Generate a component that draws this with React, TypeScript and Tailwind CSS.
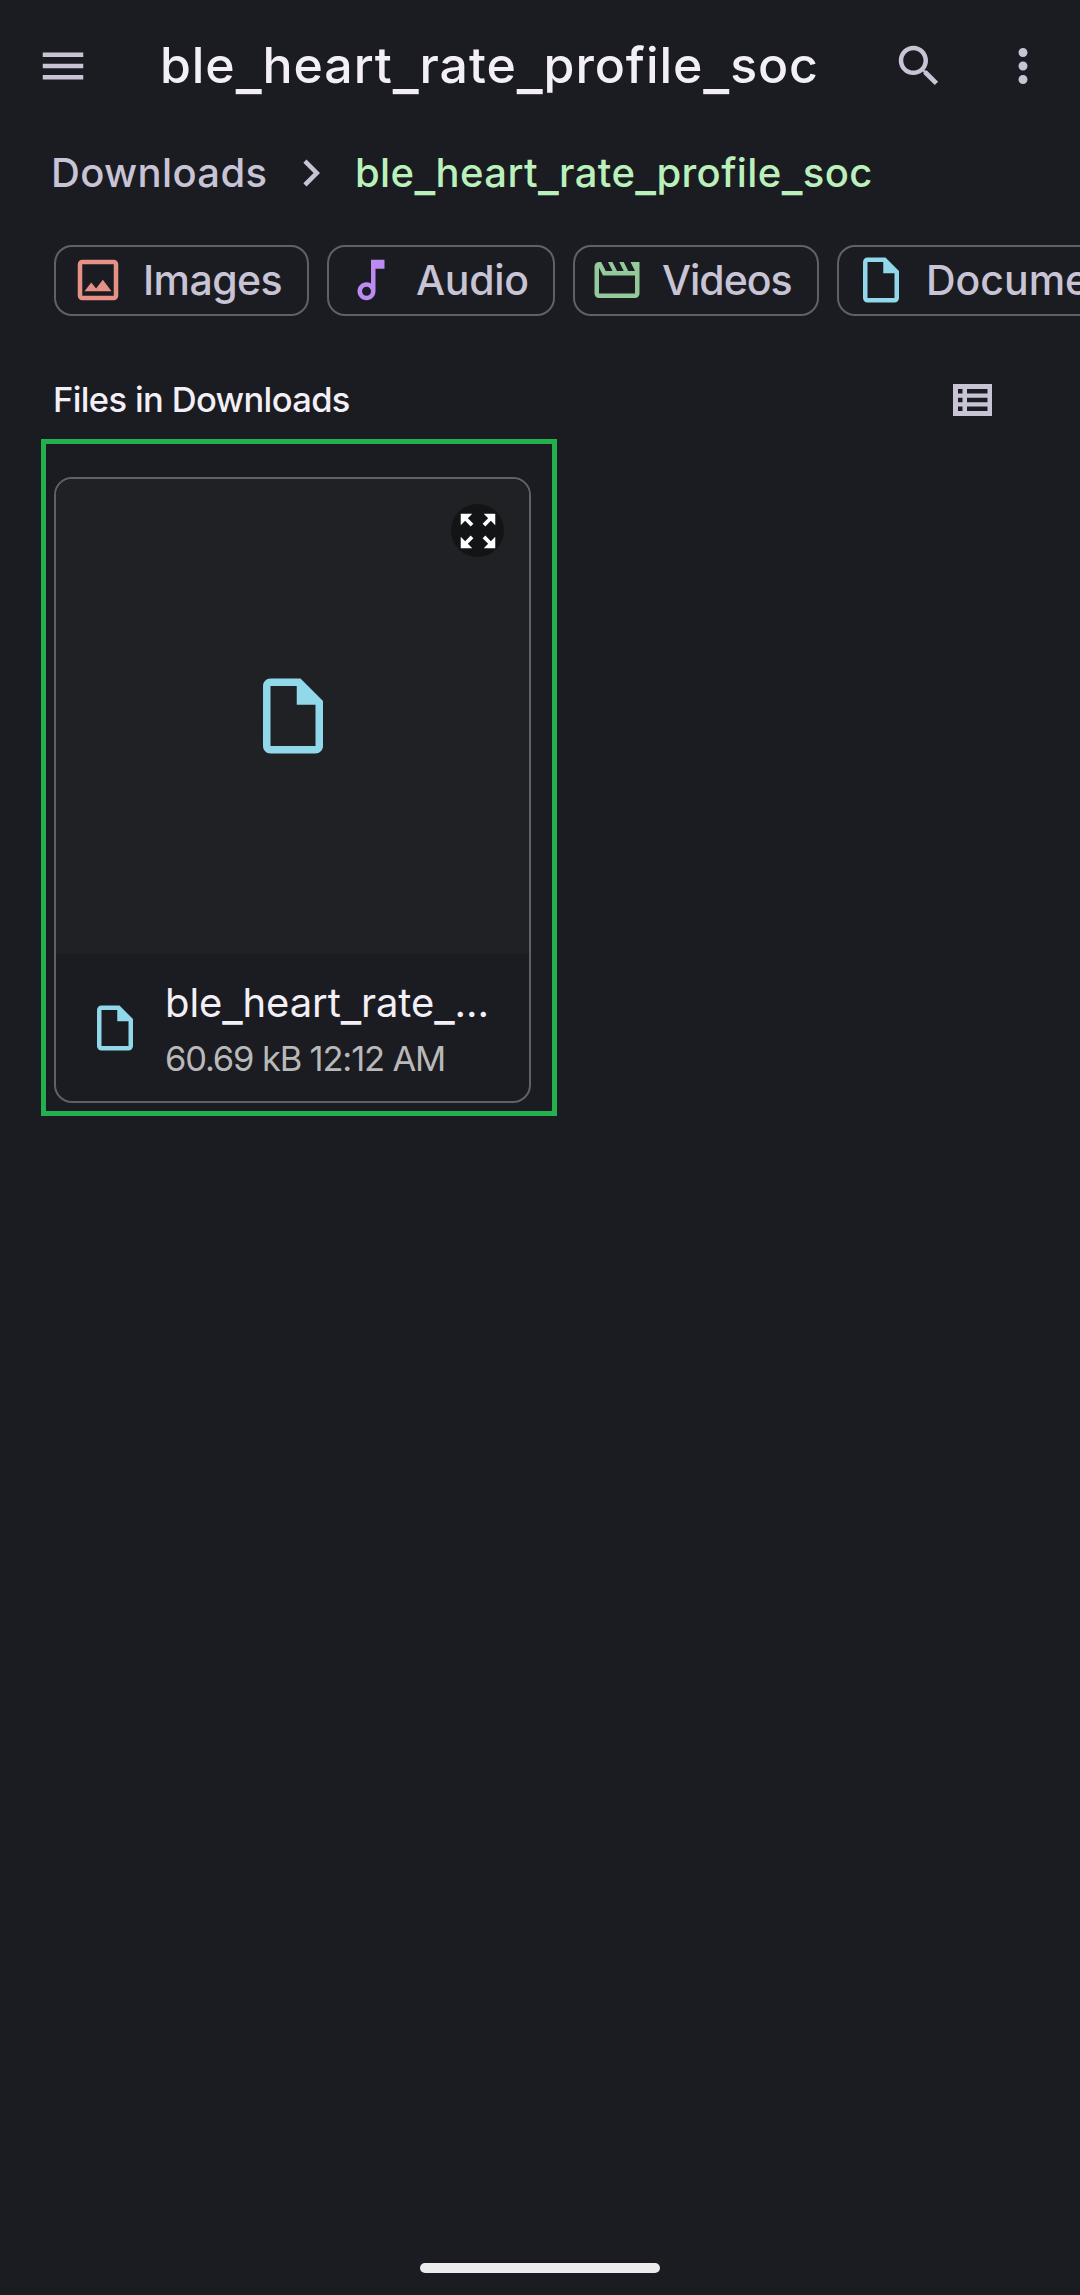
import React from "react";

const ICONS = {
  menu: "M3 18h18v-2H3v2zm0-5h18v-2H3v2zm0-7v2h18V6H3z",
  search:
    "M15.5 14h-.79l-.28-.27C15.41 12.59 16 11.11 16 9.5 16 5.91 13.09 3 9.5 3S3 5.91 3 9.5 5.91 16 9.5 16c1.61 0 3.09-.59 4.23-1.57l.27.28v.79l5 4.99L20.49 19l-4.99-5zm-6 0C7.01 14 5 11.99 5 9.5S7.01 5 9.5 5 14 7.01 14 9.5 11.99 14 9.5 14z",
  more: "M12 8c1.1 0 2-.9 2-2s-.9-2-2-2-2 .9-2 2 .9 2 2 2zm0 2c-1.1 0-2 .9-2 2s.9 2 2 2 2-.9 2-2-.9-2-2-2zm0 6c-1.1 0-2 .9-2 2s.9 2 2 2 2-.9 2-2-.9-2-2-2z",
  chevron: "M10 6L8.59 7.41 13.17 12l-4.58 4.59L10 18l6-6z",
  image:
    "M19 5v14H5V5h14m0-2H5c-1.1 0-2 .9-2 2v14c0 1.1.9 2 2 2h14c1.1 0 2-.9 2-2V5c0-1.1-.9-2-2-2zm-4.86 8.86l-3 3.87L9 13.14 6 17h12l-3.86-5.14z",
  audio:
    "M12 3l.01 10.55c-.59-.34-1.27-.55-2-.55C7.79 13 6 14.79 6 17s1.79 4 4.01 4S14 19.21 14 17V7h4V3h-6zm-1.99 16c-1.1 0-2-.9-2-2s.9-2 2-2 2 .9 2 2-.9 2-2 2z",
  video:
    "M4 6.47L5.76 10H20v8H4V6.47M22 4h-4l2 4h-3l-2-4h-2l2 4h-3l-2-4H8l2 4H7L5 4H4c-1.1 0-1.99.9-1.99 2L2 18c0 1.1.9 2 2 2h16c1.1 0 2-.9 2-2V4z",
  file: "M14 2H6c-1.1 0-1.99.9-1.99 2L4 20c0 1.1.89 2 1.99 2H18c1.1 0 2-.9 2-2V8l-6-6zM6 20V4h7v5h5v11H6z",
  expand:
    "M15 3l2.3 2.3-2.89 2.87 1.42 1.42L18.7 6.7 21 9V3h-6zM3 9l2.3-2.3 2.87 2.89 1.42-1.42L6.7 5.3 9 3H3v6zm6 12l-2.3-2.3 2.89-2.87-1.42-1.42L5.3 17.3 3 15v6h6zm12-6l-2.3 2.3-2.87-2.89-1.42 1.42 2.89 2.87L15 21h6v-6z",
};

function Icon({ name, className = "size-[54px]" }: { name: keyof typeof ICONS; className?: string }) {
  return (
    <svg viewBox="0 0 24 24" fill="currentColor" className={`shrink-0 ${className}`}>
      <path d={ICONS[name]} />
    </svg>
  );
}

/* File names are drawn with wide, low underscores. */
function FileName({ text }: { text: string }) {
  return (
    <>
      {text.split("_").map((part, i) => (
        <React.Fragment key={i}>
          {i > 0 && <span className="align-[-0.1em] text-[1.12em] leading-none">_</span>}
          {part}
        </React.Fragment>
      ))}
    </>
  );
}

const CHIPS: { label: string; icon: keyof typeof ICONS; color: string; box: string; tracking: string }[] = [
  { label: "Images", icon: "image", color: "text-[#e69086]", box: "w-[255px]", tracking: "tracking-[-0.57px]" },
  { label: "Audio", icon: "audio", color: "text-[#bb8af2]", box: "w-[228px]", tracking: "tracking-[-0.28px]" },
  { label: "Videos", icon: "video", color: "text-[#93c99b]", box: "w-[246px]", tracking: "tracking-[-1.02px]" },
  { label: "Documents", icon: "file", color: "text-[#90d8ea]", box: "w-[320px]", tracking: "tracking-normal" },
];

export default function App() {
  return (
    <div className="flex h-[2295px] w-[1080px] flex-col overflow-hidden bg-[#1b1c21] font-['Inter',sans-serif] text-[#f3eff7]">
      <header className="flex h-[133px] items-center pr-[30px] pb-px pl-9 text-[#c8c4d6]">
        <Icon name="menu" />
        <h1 className="ml-[70px] pb-[3px] whitespace-nowrap text-[50px] leading-[66px] font-medium tracking-[0.93px] text-[#f3eff7]">
          <FileName text="ble_heart_rate_profile_soc" />
        </h1>
        <div className="ml-auto flex gap-[50px]">
          <Icon name="search" />
          <Icon name="more" />
        </div>
      </header>

      <nav className="flex h-20 items-center pl-[51px] text-[40px] leading-[54px] font-medium whitespace-nowrap">
        <span className="w-[233px] tracking-[0.35px] text-[#c8c4d6]">Downloads</span>
        <Icon name="chevron" className="size-[54px] text-[#c8c4d6]" />
        <span className="ml-[17px] tracking-[0.38px] text-[#baf0bb]">
          <FileName text="ble_heart_rate_profile_soc" />
        </span>
      </nav>

      <div className="mt-8 flex gap-[18px] pl-[54px]">
        {CHIPS.map((chip) => (
          <div
            key={chip.label}
            className={`flex h-[71px] shrink-0 items-center gap-[18px] rounded-[18px] border-2 border-[#606166] pl-[15px] ${chip.box}`}
          >
            <Icon name={chip.icon} className={`mb-px size-[54px] ${chip.color}`} />
            <span className={`pb-[2px] text-[41px] leading-[54px] font-medium text-[#c8c4d6] ${chip.tracking}`}>
              {chip.label}
            </span>
          </div>
        ))}
      </div>

      <div className="mt-[62px] flex h-11 items-center justify-between pr-[88px] pl-[53px]">
        <h2 className="text-[34.5px] leading-[44px] font-medium tracking-[-0.64px]">Files in Downloads</h2>
        <svg viewBox="0 0 39 32" className="h-8 w-[39px] text-[#c8c4d6]">
          <path
            fill="currentColor"
            fillRule="evenodd"
            d="M0 0h39v32H0zM5 5v4.5h4.5V5zM14 5v4.5h20.5V5zM5 13.8v4.5h4.5v-4.5zM14 13.8v4.5h20.5v-4.5zM5 22.6v4.5h4.5v-4.5zM14 22.6v4.5h20.5v-4.5z"
          />
        </svg>
      </div>

      <div className="mt-[17px] ml-[41px] h-[677px] w-[516px] border-[5px] border-[#22b14c] pt-[33px] pl-2">
        <article className="flex h-[626px] w-[477px] flex-col overflow-hidden rounded-[18px] border-2 border-[#606166]">
          <div className="relative flex h-[475px] items-center justify-center bg-[#202124] pb-[2px] text-[#90d8ea]">
            <Icon name="file" className="size-[90px]" />
            <button className="absolute top-[25px] right-[25px] flex size-[53px] items-center justify-center rounded-full bg-[#131416] text-white">
              <Icon name="expand" className="size-[46px]" />
            </button>
          </div>
          <div className="flex flex-1 items-center pl-8">
            <Icon name="file" className="size-[54px] text-[#90d8ea]" />
            <div className="ml-[23px] flex flex-col pt-[7px] whitespace-nowrap">
              <div className="h-[56px] text-[40px] leading-[56px] tracking-[-0.1px]">
                <FileName text="ble_heart_rate_…" />
              </div>
              <div className="h-[56px] text-[34.5px] leading-[56px] tracking-[-1.16px] text-[#b9b9ba]">
                60.69 kB 12:12 AM
              </div>
            </div>
          </div>
        </article>
      </div>

      <div className="mt-auto mb-[22px] h-2.5 w-60 self-center rounded-full bg-[#ececec]" />
    </div>
  );
}
